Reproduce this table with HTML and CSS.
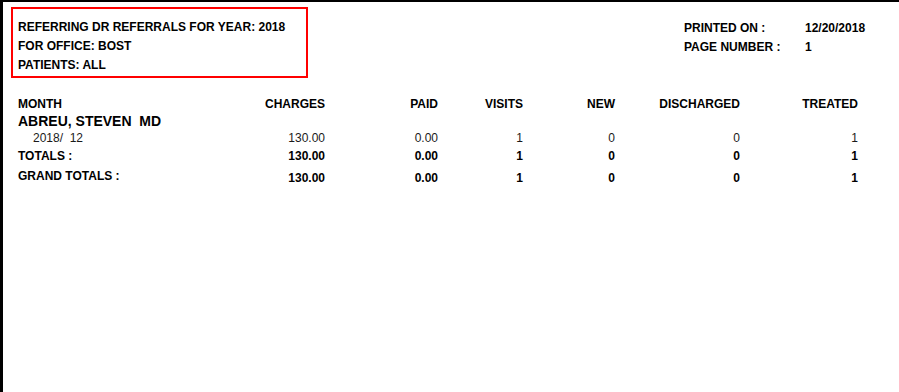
FILE: index.html
```html
<!DOCTYPE html>
<html>
<head>
<meta charset="utf-8">
<link rel="stylesheet" href="styles.css">
</head>
<body>
<div class="page">
  <div class="header">
    <div class="title-box">
      <div class="line">REFERRING DR REFERRALS FOR YEAR: 2018</div>
      <div class="line">FOR OFFICE: BOST</div>
      <div class="line">PATIENTS: ALL</div>
    </div>
    <div class="info">
      <div class="info-label">PRINTED ON :</div><div class="info-val">12/20/2018</div>
      <div class="info-label">PAGE NUMBER :</div><div class="info-val">1</div>
    </div>
  </div>
  <div class="report">
    <div class="row head">
      <div class="c-label">MONTH</div>
      <div class="c-num">CHARGES</div>
      <div class="c-num">PAID</div>
      <div class="c-num">VISITS</div>
      <div class="c-num">NEW</div>
      <div class="c-num">DISCHARGED</div>
      <div class="c-num">TREATED</div>
    </div>
    <div class="row doctor">
      <div class="c-label doc-name">ABREU, STEVEN  MD</div>
    </div>
    <div class="row detail">
      <div class="c-label month">2018/  12</div>
      <div class="c-num">130.00</div>
      <div class="c-num">0.00</div>
      <div class="c-num">1</div>
      <div class="c-num">0</div>
      <div class="c-num">0</div>
      <div class="c-num">1</div>
    </div>
    <div class="row totals">
      <div class="c-label">TOTALS :</div>
      <div class="c-num">130.00</div>
      <div class="c-num">0.00</div>
      <div class="c-num">1</div>
      <div class="c-num">0</div>
      <div class="c-num">0</div>
      <div class="c-num">1</div>
    </div>
    <div class="row grand">
      <div class="c-label">GRAND TOTALS :</div>
      <div class="c-num">130.00</div>
      <div class="c-num">0.00</div>
      <div class="c-num">1</div>
      <div class="c-num">0</div>
      <div class="c-num">0</div>
      <div class="c-num">1</div>
    </div>
  </div>
</div>
</body>
</html>
```
FILE: styles.css
```css
html, body {
  margin: 0;
  padding: 0;
  background: #fff;
}
body {
  font-family: "Liberation Sans", Arial, sans-serif;
  font-size: 12px;
  color: #000;
}
.page {
  border-top: 2px solid #000;
  border-left: 3px solid #000;
  height: 392px;
  box-sizing: border-box;
}
.header {
  display: flex;
  gap: 376px;
  padding-left: 8px;
  padding-top: 5px;
}
.title-box {
  box-sizing: border-box;
  width: 297px;
  height: 71px;
  border: 2px solid #f00;
  padding: 9px 0 0 5px;
  font-weight: bold;
}
.line {
  line-height: 19px;
  height: 19px;
}
.info {
  display: grid;
  grid-template-columns: 121px auto;
  padding-top: 12px;
  font-weight: bold;
  line-height: 19px;
  align-content: start;
}
.report {
  margin-top: 18px;
  padding-left: 15px;
}
.row {
  display: grid;
  grid-template-columns: 200px 107px 113px 85px 92px 125px 118px;
  line-height: 17px;
  height: 17px;
}
.c-num {
  text-align: right;
}
.head, .totals, .grand {
  font-weight: bold;
}
.doc-name {
  font-size: 14px;
  font-weight: bold;
  white-space: pre;
}
.detail {
  height: 18px;
  color: #1a1a1a;
}
.month {
  padding-left: 15px;
  white-space: pre;
}
.totals {
  height: 20px;
}
.grand .c-num {
  padding-top: 2px;
}
```
